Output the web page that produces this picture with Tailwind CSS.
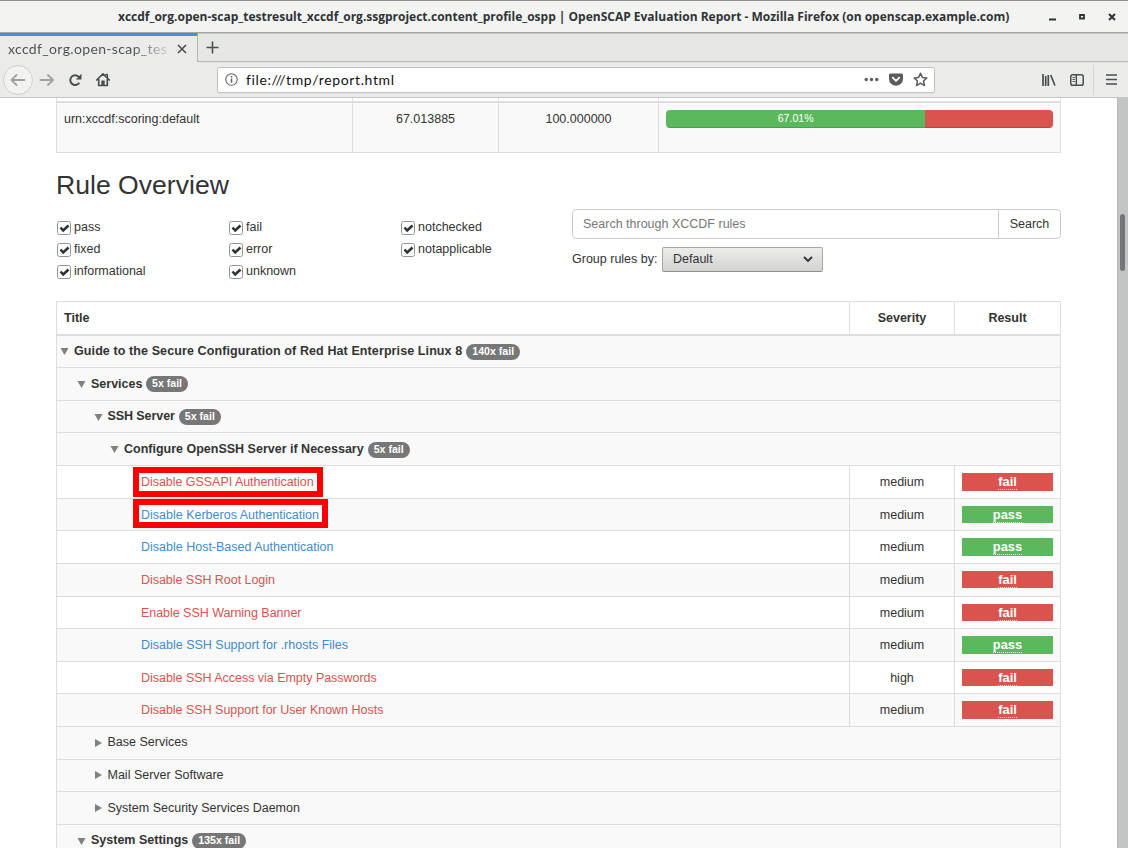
<!DOCTYPE html>
<html lang="en">
<head>
<meta charset="utf-8">
<title>OpenSCAP Evaluation Report</title>
<script src="https://cdn.jsdelivr.net/npm/@tailwindcss/browser@4"></script>
</head>
<body class="w-[1128px] h-[848px] overflow-hidden flex flex-col bg-white text-[#333] font-['Liberation_Sans',sans-serif] text-[12.500px] leading-[17.64px]">

<!-- window title -->
<header class="h-[33px] shrink-0 border-t border-[#8f8f8f] border-b border-b-[#a5a5a2] bg-[#f3f3f2] flex items-center text-[#2e3436]">
  <h1 class="ml-[118px] w-[892px] whitespace-nowrap font-['Open_Sans',sans-serif] font-bold text-[12px] tracking-[-0.005px]">xccdf_org.open-scap_testresult_xccdf_org.ssgproject.content_profile_ospp | OpenSCAP Evaluation Report - Mozilla Firefox (on openscap.example.com)</h1>
  <svg class="ml-[36px]" width="74" height="12" viewBox="0 0 74 12" fill="none" stroke="#2e3436" stroke-width="2"><path d="M3 8.500h7M63 3l6 6M69 3l-6 6"/><path d="M34 4h4v3.500h-4z" stroke-width="1.800"/></svg>
</header>

<!-- tabs -->
<div class="h-[29px] shrink-0 flex bg-[#e7e7e6]">
  <div class="w-[198px] h-full bg-[#ebebea] border-t-[3px] border-t-[#4a90d9] border-r border-r-[#b5b5b2] flex items-center">
    <span class="ml-[8px] w-[165px] overflow-hidden whitespace-nowrap font-[Lato,sans-serif] text-[14px] tracking-[0.35px] bg-linear-to-r from-[#4a4e50] from-75% to-[#4a4e50]/5 bg-clip-text text-transparent">xccdf_org.open-scap_tes</span>
    <svg class="ml-[4px]" width="10" height="10" viewBox="0 0 10 10" stroke="#4a4e50" stroke-width="1.6"><path d="M1 1l8 8M9 1l-8 8"/></svg>
  </div>
  <div class="flex-1 border-t border-[#c4c4c2] border-b border-b-[#b5b5b2] pl-[8px] pt-[7px]">
    <svg width="13" height="13" viewBox="0 0 13 13" stroke="#4a4e50" stroke-width="1.6"><path d="M6.500 .5v12M.5 6.500h12"/></svg>
  </div>
</div>

<!-- toolbar -->
<nav class="h-[36px] shrink-0 bg-[#ebebea] border-b border-[#c6c6c4] flex items-center">
  <div class="ml-[3px] size-[30px] rounded-full border border-[#cfcfcd] bg-[#f2f2f1] flex items-center justify-center">
    <svg width="16" height="14" viewBox="0 0 16 14" fill="none" stroke="#a0a2a2" stroke-width="1.800" stroke-linecap="round" stroke-linejoin="round"><path d="M14.500 7H1.500M6.500 2L1.500 7l5 5"/></svg>
  </div>
  <svg class="ml-[6px]" width="16" height="14" viewBox="0 0 16 14" fill="none" stroke="#a0a2a2" stroke-width="1.800" stroke-linecap="round" stroke-linejoin="round"><path d="M1.500 7h12.500M9 2l5 5-5 5"/></svg>
  <svg class="ml-[13px]" width="15" height="14" viewBox="0 0 15 14" fill="none" stroke="#4a4e50" stroke-width="2"><path d="M11.300 9.700A4.900 4.900 0 1 1 11 4"/><path d="M13.500 .8v5.700H7.800z" fill="#4a4e50" stroke="none"/></svg>
  <svg class="ml-[12px]" width="16" height="15" viewBox="0 0 16 15" fill="none" stroke="#4a4e50" stroke-width="1.700" stroke-linejoin="round" stroke-linecap="round"><path d="M1.700 8L8 1.800 14.300 8M3.700 7v6.500h8.600V7"/><path d="M11 2.500h1.300v3" stroke-width="1.500"/><path d="M6.300 13.500V8.500h3.400v5z" fill="#4a4e50" stroke="none"/></svg>
  <div class="ml-[106px] w-[718px] h-[26px] rounded-[3px] border border-[#c3c3c1] bg-white shadow-xs flex items-center">
    <svg class="ml-[7px]" width="13" height="13" viewBox="0 0 13 13" fill="none" stroke="#666" stroke-width="1.100"><circle cx="6.500" cy="6.500" r="5.700"/><path d="M6.500 5.500v4.200M6.500 3v1.500" stroke-width="1.500"/></svg>
    <span class="ml-[8px] w-[618px] whitespace-nowrap font-[Lato,sans-serif] text-[14px] tracking-[0.63px] text-[#111]">file:///tmp/report.html</span>
    <svg width="15" height="5" viewBox="0 0 15 5" fill="#5c5c5c"><circle cx="2.200" cy="2.500" r="1.700"/><circle cx="7.500" cy="2.500" r="1.700"/><circle cx="12.800" cy="2.500" r="1.700"/></svg>
    <svg class="ml-[10px]" width="14" height="13" viewBox="0 0 14 13"><path d="M1.500 .5h11c.8 0 1.500.6 1.500 1.500v4a7 6.700 0 0 1-14 0V2C0 1.100.7.500 1.500.500z" fill="#5c5c5c"/><path d="M3.800 4.700L7 7.800l3.200-3.100" fill="none" stroke="#fff" stroke-width="1.800" stroke-linecap="round" stroke-linejoin="round"/></svg>
    <svg class="ml-[10px]" width="15" height="15" viewBox="0 0 15 15" fill="none" stroke="#5c5c5c" stroke-width="1.500" stroke-linejoin="round"><path d="M7.500 1.200l1.900 4.200 4.500.5-3.400 3.100 1 4.600-4-2.400-4 2.400 1-4.600L1.100 5.900l4.500-.5z"/></svg>
  </div>
  <svg class="ml-[107px]" width="14" height="12" viewBox="0 0 14 12" stroke="#4a4e50" stroke-width="1.700"><path d="M1 0v12M3.700 2v10M6.300 1v11M8.700 1L13 11.500"/></svg>
  <svg class="ml-[14px]" width="14" height="12" viewBox="0 0 14 12" fill="none" stroke="#4a4e50" stroke-width="1.500"><rect x=".8" y=".8" width="12.400" height="10.400" rx="1.800"/><path d="M6.300 1v10"/><path d="M2.500 3.500h2.300M2.500 5.500h2.300M2.500 7.500h2.300" stroke-width="1"/></svg>
  <div class="ml-[9px] w-px h-[30px] bg-[#d4d4d2]"></div>
  <svg class="ml-[12px]" width="11" height="11" viewBox="0 0 11 11" stroke="#4a4e50" stroke-width="1.700"><path d="M0 1h11M0 5.500h11M0 10h11"/></svg>
</nav>

<div class="flex-1 min-h-0 flex">
<main class="ml-[56px] w-[1005px] h-full overflow-hidden">

  <!-- score row -->
  <div class="h-[55px] border-x border-b border-[#ddd] flex flex-col">
    <div class="h-[5px] shrink-0 border-b-2 border-[#ddd] grid grid-cols-[296px_146px_160px_1fr] divide-x divide-[#ddd]"><i></i><i></i><i></i><i></i></div>
    <div class="flex-1 bg-[#f9f9f9] grid grid-cols-[296px_146px_160px_1fr] divide-x divide-[#ddd]">
      <div class="pl-[7px] pt-[8px]">urn:xccdf:scoring:default</div>
      <div class="pt-[8px] text-center">67.013885</div>
      <div class="pt-[8px] text-center">100.000000</div>
      <div class="px-[7px] pt-[7px]">
        <div class="h-[18px] rounded-[4px] overflow-hidden flex text-white text-[10.600px] text-center leading-[17px]">
          <div class="bg-[#5cb85c] shadow-[inset_0_-1px_0_rgba(0,0,0,.15)]" style="width:67.01%">67.01%</div>
          <div class="flex-1 bg-[#d9534f] shadow-[inset_0_-1px_0_rgba(0,0,0,.15)]"></div>
        </div>
      </div>
    </div>
  </div>

  <h2 class="mt-[18px] h-[29px] text-[26.600px] leading-[29px]">Rule Overview</h2>

  <div class="mt-[9px] h-[92px] flex">
    <svg class="hidden"><defs>
      <linearGradient id="face" x2="0" y2="1"><stop stop-color="#fcfcfc"/><stop offset="1" stop-color="#dededc"/></linearGradient>
      <symbol id="check" viewBox="0 0 14 14"><rect x=".5" y=".5" width="13" height="13" rx="2" fill="url(#face)" stroke="#949490"/><path d="M3.500 6.500L6.200 9.500 11.500 4.500" fill="none" stroke="#2e3436" stroke-width="2.600"/></symbol>
    </defs></svg>
    <div class="w-[516px] pt-[10px] grid grid-cols-3 auto-rows-[22px] content-start">
      <label class="flex gap-[3.500px]"><svg class="size-[14px] mt-[2px] ml-[0.500px]"><use href="#check"/></svg>pass</label>
      <label class="flex gap-[3.500px]"><svg class="size-[14px] mt-[2px] ml-[0.500px]"><use href="#check"/></svg>fail</label>
      <label class="flex gap-[3.500px]"><svg class="size-[14px] mt-[2px] ml-[0.500px]"><use href="#check"/></svg>notchecked</label>
      <label class="flex gap-[3.500px]"><svg class="size-[14px] mt-[2px] ml-[0.500px]"><use href="#check"/></svg>fixed</label>
      <label class="flex gap-[3.500px]"><svg class="size-[14px] mt-[2px] ml-[0.500px]"><use href="#check"/></svg>error</label>
      <label class="flex gap-[3.500px]"><svg class="size-[14px] mt-[2px] ml-[0.500px]"><use href="#check"/></svg>notapplicable</label>
      <label class="flex gap-[3.500px]"><svg class="size-[14px] mt-[2px] ml-[0.500px]"><use href="#check"/></svg>informational</label>
      <label class="flex gap-[3.500px]"><svg class="size-[14px] mt-[2px] ml-[0.500px]"><use href="#check"/></svg>unknown</label>
    </div>
    <div class="flex-1">
      <div class="h-[30px] border border-[#ccc] rounded-[4px] flex leading-[28px]">
        <div class="flex-1 pl-[10px] text-[#777] border-r border-[#ccc]">Search through XCCDF rules</div>
        <div class="w-[61px] text-center">Search</div>
      </div>
      <div class="mt-[8px] flex items-center">
        <span class="pt-px w-[86px]">Group rules by:</span>
        <div class="ml-[4px] w-[161px] h-[25px] rounded-[2px] border border-[#a6a6a3] border-b-[#8e8e8a] bg-linear-to-b from-[#ececeb] to-[#d2d2d0] flex items-center pl-[10px] pr-[9px] justify-between">
          <span class="pt-px">Default</span>
          <svg width="10" height="7" viewBox="0 0 10 7" fill="none" stroke="#2e3436" stroke-width="1.900"><path d="M1 1l4 4 4-4"/></svg>
        </div>
      </div>
    </div>
  </div>

  <!-- rules table -->
  <div class="border border-[#ddd] border-b-0 **:data-row:h-[32.630px] **:data-row:border-b **:data-row:border-[#ddd] **:data-group:bg-[#f9f9f9] **:data-group:flex **:data-group:items-center **:data-group:pt-px **:data-rule:grid **:data-rule:grid-cols-[1fr_106px_105px] **:data-rule:leading-[32.630px] **:data-sev:text-center **:data-sev:border-x **:data-sev:border-[#ddd] **:data-badge:ml-[4px] **:data-badge:rounded-full **:data-badge:bg-[#777] **:data-badge:text-white **:data-badge:text-[10.600px] **:data-badge:leading-[15px] **:data-badge:h-[16px] **:data-badge:px-[6px] **:data-badge:font-bold **:data-badge:tracking-normal">
    <div class="h-[33.500px] border-b-2 border-[#ddd] grid grid-cols-[1fr_106px_105px] font-bold leading-[32px]">
      <div class="pl-[7px]">Title</div><div class="text-center border-x border-[#ddd]">Severity</div><div class="text-center">Result</div>
    </div>
    <div data-row data-group class="pl-[3px] font-bold tracking-[0.100px]"><svg class="mr-[5px]" width="9" height="7" fill="#808080"><path d="M.5 0h8L4.500 7z"/></svg>Guide to the Secure Configuration of Red Hat Enterprise Linux 8<span data-badge>140x fail</span></div>
    <div data-row data-group class="pl-[20px] font-bold"><svg class="mr-[5px]" width="9" height="7" fill="#808080"><path d="M.5 0h8L4.500 7z"/></svg><span class="w-[51px]">Services</span><span data-badge>5x fail</span></div>
    <div data-row data-group class="pl-[36.500px] font-bold tracking-[-0.080px]"><svg class="mr-[5px]" width="9" height="7" fill="#808080"><path d="M.5 0h8L4.500 7z"/></svg>SSH Server<span data-badge>5x fail</span></div>
    <div data-row data-group class="pl-[53px] font-bold"><svg class="mr-[5px]" width="9" height="7" fill="#808080"><path d="M.5 0h8L4.500 7z"/></svg>Configure OpenSSH Server if Necessary<span data-badge>5x fail</span></div>

    <div data-row data-rule>
      <div class="relative pl-[84px] text-[#d9534f] tracking-[-0.040px]">Disable GSSAPI Authentication<i class="absolute left-[76px] top-[1px] w-[190px] h-[30px] border-6 border-[#f00]"></i></div>
      <div data-sev>medium</div>
      <div class="p-[7px] pb-0"><div class="h-[17.600px] bg-[#d9534f] text-white text-[12.900px] text-center font-bold leading-[17.600px]"><span class="border-b border-dotted border-white/80 inline-block leading-[14px]">fail</span></div></div>
    </div>
    <div data-row data-rule class="bg-[#f9f9f9]">
      <div class="relative pl-[84px] text-[#428bca]"><i class="absolute left-[76px] top-0 w-[195px] h-[29px] border-6 border-[#f00] bg-white"></i><span class="relative">Disable Kerberos Authentication</span></div>
      <div data-sev>medium</div>
      <div class="p-[7px] pb-0"><div class="h-[17.600px] bg-[#5cb85c] text-white text-[12.900px] text-center font-bold leading-[17.600px]"><span class="border-b border-dotted border-white/80 inline-block leading-[14px]">pass</span></div></div>
    </div>
    <div data-row data-rule>
      <div class="pl-[84px] text-[#428bca]">Disable Host-Based Authentication</div>
      <div data-sev>medium</div>
      <div class="p-[7px] pb-0"><div class="h-[17.600px] bg-[#5cb85c] text-white text-[12.900px] text-center font-bold leading-[17.600px]"><span class="border-b border-dotted border-white/80 inline-block leading-[14px]">pass</span></div></div>
    </div>
    <div data-row data-rule class="bg-[#f9f9f9]">
      <div class="pl-[84px] text-[#d9534f] tracking-[-0.040px]">Disable SSH Root Login</div>
      <div data-sev>medium</div>
      <div class="p-[7px] pb-0"><div class="h-[17.600px] bg-[#d9534f] text-white text-[12.900px] text-center font-bold leading-[17.600px]"><span class="border-b border-dotted border-white/80 inline-block leading-[14px]">fail</span></div></div>
    </div>
    <div data-row data-rule>
      <div class="pl-[84px] text-[#d9534f] tracking-[-0.040px]">Enable SSH Warning Banner</div>
      <div data-sev>medium</div>
      <div class="p-[7px] pb-0"><div class="h-[17.600px] bg-[#d9534f] text-white text-[12.900px] text-center font-bold leading-[17.600px]"><span class="border-b border-dotted border-white/80 inline-block leading-[14px]">fail</span></div></div>
    </div>
    <div data-row data-rule class="bg-[#f9f9f9]">
      <div class="pl-[84px] text-[#428bca]">Disable SSH Support for .rhosts Files</div>
      <div data-sev>medium</div>
      <div class="p-[7px] pb-0"><div class="h-[17.600px] bg-[#5cb85c] text-white text-[12.900px] text-center font-bold leading-[17.600px]"><span class="border-b border-dotted border-white/80 inline-block leading-[14px]">pass</span></div></div>
    </div>
    <div data-row data-rule>
      <div class="pl-[84px] text-[#d9534f] tracking-[-0.030px]">Disable SSH Access via Empty Passwords</div>
      <div data-sev>high</div>
      <div class="p-[7px] pb-0"><div class="h-[17.600px] bg-[#d9534f] text-white text-[12.900px] text-center font-bold leading-[17.600px]"><span class="border-b border-dotted border-white/80 inline-block leading-[14px]">fail</span></div></div>
    </div>
    <div data-row data-rule class="bg-[#f9f9f9]">
      <div class="pl-[84px] text-[#d9534f] tracking-[-0.020px]">Disable SSH Support for User Known Hosts</div>
      <div data-sev>medium</div>
      <div class="p-[7px] pb-0"><div class="h-[17.600px] bg-[#d9534f] text-white text-[12.900px] text-center font-bold leading-[17.600px]"><span class="border-b border-dotted border-white/80 inline-block leading-[14px]">fail</span></div></div>
    </div>

    <div data-row data-group class="pl-[37.500px]"><svg class="mr-[5px] -mt-px" width="8" height="8" fill="#808080"><path d="M0 0v8L7 4z"/></svg>Base Services</div>
    <div data-row data-group class="pl-[37.500px]"><svg class="mr-[5px] -mt-px" width="8" height="8" fill="#808080"><path d="M0 0v8L7 4z"/></svg>Mail Server Software</div>
    <div data-row data-group class="pl-[37.500px]"><svg class="mr-[5px] -mt-px" width="8" height="8" fill="#808080"><path d="M0 0v8L7 4z"/></svg>System Security Services Daemon</div>
    <div data-row data-group class="pl-[20px] font-bold"><svg class="mr-[5px]" width="9" height="7" fill="#808080"><path d="M.5 0h8L4.500 7z"/></svg>System Settings<span data-badge>135x fail</span></div>
  </div>
</main>

<!-- scrollbar -->
<aside class="ml-auto w-[11px] bg-[#c3c4c4] border-l border-[#b8b8b8] pt-[116px] pl-[2px]"><div class="w-[5px] h-[57px] rounded-full bg-[#747778]"></div></aside>
</div>
</body>
</html>
